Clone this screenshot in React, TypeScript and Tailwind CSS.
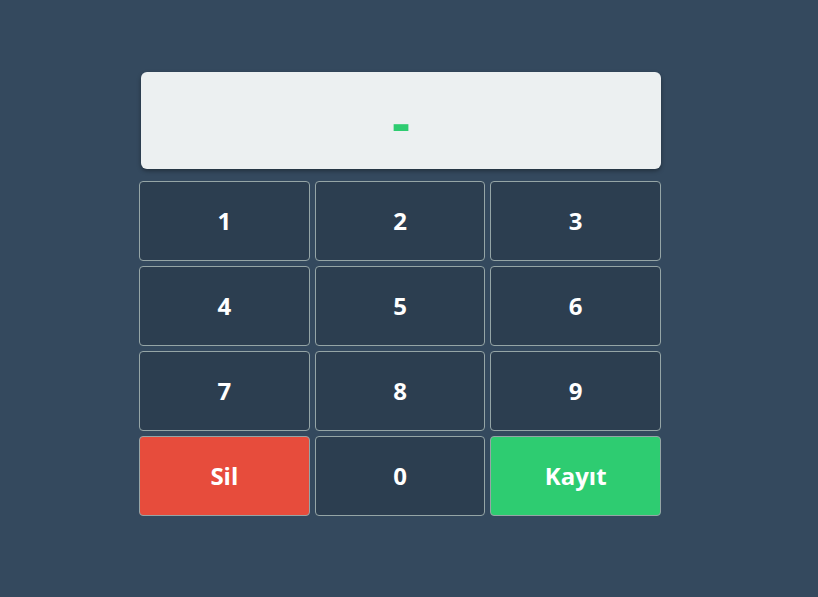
const keys = ["1", "2", "3", "4", "5", "6", "7", "8", "9"];

const App = () => {
  return (
    <div
      className="min-h-screen bg-[#34495e] flex justify-center pt-[72px] pr-[18px]"
      style={{ fontFamily: '"Open Sans", sans-serif' }}
    >
      <div className="w-[522px] flex flex-col">
        <div className="ml-[2px] w-[520px] h-[97px] bg-[#ecf0f1] rounded-md shadow-[0_2px_4px_rgba(0,0,0,0.35)] flex items-center justify-center">
          <span className="text-[#2ecc71] text-[56px] font-bold leading-none">-</span>
        </div>
        <div className="mt-3 grid grid-cols-3 gap-[5px]">
          {keys.map((k) => (
            <button
              key={k}
              className="h-[80px] bg-[#2c3e50] border border-[#95a5a6] rounded text-white text-2xl font-bold"
            >
              {k}
            </button>
          ))}
          <button className="h-[80px] bg-[#e74c3c] border border-[#95a5a6] rounded text-white text-2xl font-bold">
            Sil
          </button>
          <button className="h-[80px] bg-[#2c3e50] border border-[#95a5a6] rounded text-white text-2xl font-bold">
            0
          </button>
          <button className="h-[80px] bg-[#2ecc71] border border-[#95a5a6] rounded text-white text-2xl font-bold">
            Kayıt
          </button>
        </div>
      </div>
    </div>
  );
};

export default App;
